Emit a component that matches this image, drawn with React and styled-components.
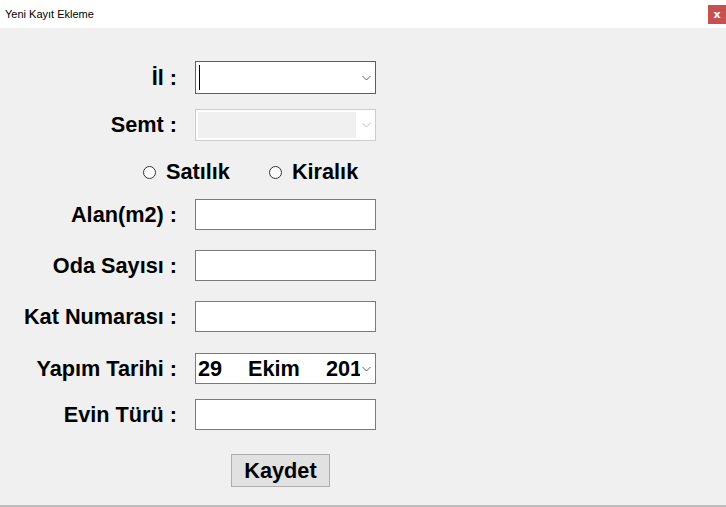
import React from 'react';
import styled, { createGlobalStyle } from 'styled-components';

const GlobalStyle = createGlobalStyle`
  html, body {
    margin: 0;
    padding: 0;
    background: #f0f0f0;
  }
`;

const Window = styled.div`
  width: 726px;
  height: 507px;
  display: flex;
  flex-direction: column;
  background: #f0f0f0;
  overflow: hidden;
  font-family: "Liberation Sans", Arial, sans-serif;
`;

const TitleBar = styled.div`
  height: 28px;
  flex: none;
  background: #ffffff;
  display: flex;
  align-items: flex-start;
  justify-content: space-between;
`;

const TitleText = styled.span`
  font-family: "Liberation Sans", Arial, sans-serif;
  font-size: 11px;
  color: #000;
  margin: 8px 0 0 5px;
`;

const CloseButton = styled.div`
  width: 18px;
  height: 19px;
  margin-top: 5px;
  background: #c75050;
  color: #fff;
  font-size: 11px;
  font-weight: bold;
  display: flex;
  align-items: center;
  justify-content: center;
  font-family: "DejaVu Sans", sans-serif;
`;

const Body = styled.div`
  flex: 1;
  display: flex;
  flex-direction: column;
  padding-top: 33px;
  border-bottom: 2px solid #bdbdbd;
`;

const Row = styled.div`
  display: flex;
  align-items: center;
  margin-top: ${p => p.$gap || 0}px;
`;

const Label = styled.div`
  width: 195px;
  text-align: right;
  padding-right: 18px;
  box-sizing: border-box;
  font-size: 21.7px;
  line-height: 24px;
  font-weight: bold;
  color: #000;
  white-space: nowrap;
`;

const Field = styled.div`
  width: 181px;
  height: ${p => p.$h || 31}px;
  box-sizing: border-box;
  border: 1px solid ${p => (p.$focus ? '#0078d7' : p.$disabled ? '#cccccc' : '#7a7a7a')};
  background: #fff;
  position: relative;
  display: flex;
  align-items: center;
  overflow: hidden;
`;

const DisabledFill = styled.div`
  position: absolute;
  left: 2px;
  top: 2px;
  width: 158px;
  bottom: 2px;
  background: #f0f0f0;
`;

const Caret = styled.div`
  position: absolute;
  left: 3px;
  top: 3px;
  width: 1px;
  height: 25px;
  background: #000;
`;

const Chevron = styled.svg`
  position: absolute;
  right: 4px;
  top: 50%;
  margin-top: -3px;
`;

const DateText = styled.div`
  display: flex;
  width: 164px;
  overflow: hidden;
  font-size: 21.7px;
  line-height: 24px;
  font-weight: bold;
  color: #000;
  white-space: nowrap;
  padding-left: 2px;
  box-sizing: border-box;
`;

const DatePart = styled.span`
  width: ${p => p.$w}px;
  flex: none;
`;

const RadioRow = styled.div`
  display: flex;
  align-items: center;
  margin-top: 19px;
  padding-left: 143px;
`;

const RadioItem = styled.label`
  display: flex;
  align-items: center;
  gap: 10px;
  font-size: 21.7px;
  line-height: 24px;
  font-weight: bold;
  color: #000;
  margin-right: ${p => p.$mr || 0}px;
`;

const RadioCircle = styled.span`
  width: 11px;
  height: 11px;
  border: 1px solid #333;
  border-radius: 50%;
  background: #fff;
  flex: none;
`;

const ButtonRow = styled.div`
  display: flex;
  margin-top: 24px;
  padding-left: 231px;
`;

const Button = styled.button`
  width: 99px;
  height: 33px;
  background: #e1e1e1;
  border: 1px solid #adadad;
  font-family: "Liberation Sans", Arial, sans-serif;
  font-size: 21.7px;
  font-weight: bold;
  color: #000;
  padding: 0;
`;

const ChevronIcon = ({ disabled }) => (
  <Chevron width="9" height="6" viewBox="0 0 9 6">
    <path d="M0.5 1 L4.5 5 L8.5 1" fill="none" stroke={disabled ? '#bfbfbf' : '#606060'} strokeWidth="1" />
  </Chevron>
);

const App = () => (
  <>
    <GlobalStyle />
    <Window>
      <TitleBar>
        <TitleText>Yeni Kayıt Ekleme</TitleText>
        <CloseButton>x</CloseButton>
      </TitleBar>
      <Body>
        <Row>
          <Label>İl :</Label>
          <Field $h={33} $focus>
            <Caret />
            <ChevronIcon />
          </Field>
        </Row>
        <Row $gap={15}>
          <Label>Semt :</Label>
          <Field $h={32} $disabled>
            <DisabledFill />
            <ChevronIcon disabled />
          </Field>
        </Row>
        <RadioRow>
          <RadioItem $mr={39}>
            <RadioCircle />
            Satılık
          </RadioItem>
          <RadioItem>
            <RadioCircle />
            Kiralık
          </RadioItem>
        </RadioRow>
        <Row $gap={15}>
          <Label>Alan(m2) :</Label>
          <Field />
        </Row>
        <Row $gap={20}>
          <Label>Oda Sayısı :</Label>
          <Field />
        </Row>
        <Row $gap={20}>
          <Label>Kat Numarası :</Label>
          <Field />
        </Row>
        <Row $gap={21}>
          <Label>Yapım Tarihi :</Label>
          <Field>
            <DateText>
              <DatePart $w={50}>29</DatePart>
              <DatePart $w={78}>Ekim</DatePart>
              <DatePart $w={60}>2017</DatePart>
            </DateText>
            <ChevronIcon />
          </Field>
        </Row>
        <Row $gap={15}>
          <Label>Evin Türü :</Label>
          <Field />
        </Row>
        <ButtonRow>
          <Button>Kaydet</Button>
        </ButtonRow>
      </Body>
    </Window>
  </>
);

export default App;
